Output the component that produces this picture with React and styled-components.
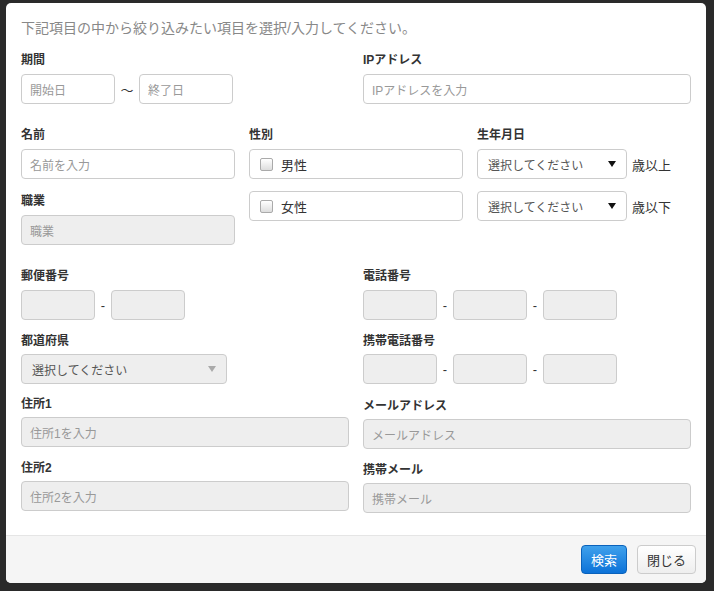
import React from "react";
import styled, { createGlobalStyle } from "styled-components";

const G = createGlobalStyle`
  body{margin:0;background:#2a2a2a;font-family:"Liberation Sans","Noto Sans CJK JP",sans-serif;}
`;
const Modal = styled.div`
  position:relative;margin:3px 0 0 6px;width:700px;height:580px;background:#fff;border-radius:5px;
  display:flex;flex-direction:column;overflow:hidden;
`;
const Body = styled.div`flex:1;padding:15px 15px 0 15px;`;
const Intro = styled.div`font-size:14px;color:#888;margin-bottom:15px;line-height:20px;`;
const Row = styled.div`display:flex;gap:14px;margin-top:${p=>p.mt||0}px;`;
const Col = styled.div`width:${p=>p.w}px;display:flex;flex-direction:column;`;
const Label = styled.div`font-size:12px;font-weight:bold;color:#333;height:14px;line-height:14px;margin-bottom:${p=>p.mb??7}px;`;
const Input = styled.div`
  box-sizing:border-box;width:${p=>p.w}px;height:30px;border:1px solid #ccc;border-radius:4px;
  background:${p=>p.dis?"#eee":"#fff"};font-size:12px;color:#999;padding:0 8px;display:flex;align-items:center;
`;
const Line = styled.div`display:flex;align-items:center;gap:${p=>p.g??6}px;`;
const Sep = styled.span`font-size:13px;color:#333;width:${p=>p.w}px;text-align:center;`;
const Check = styled(Input)`color:#333;font-size:13px;gap:8px;padding:0 10px;`;
const Box = styled.span`width:11px;height:11px;border:1px solid #aaa;border-radius:2px;background:linear-gradient(#fff,#ddd);`;
const Select = styled(Input)`color:#555;justify-content:space-between;padding:0 10px;
  &::after{content:"";border-left:4px solid transparent;border-right:4px solid transparent;border-top:6px solid ${p=>p.light?"#aaa":"#111"};}`;
const Suffix = styled.span`font-size:13px;color:#333;`;
const Footer = styled.div`height:47px;border-top:1px solid #e5e5e5;background:#f5f5f5;display:flex;justify-content:flex-end;align-items:center;gap:10px;padding:0 10px;`;
const Btn = styled.div`
  height:29px;box-sizing:border-box;padding:0 9px;border-radius:4px;display:flex;align-items:center;font-size:13px;
  ${p=>p.primary?"background:linear-gradient(#3fa1ec,#0c72d8);color:#fff;border:1px solid #0a62bb;":"background:linear-gradient(#fff,#eee);color:#333;border:1px solid #ccc;"}
`;

export default function App(){
  return <><G/><Modal>
    <Body>
      <Intro>下記項目の中から絞り込みたい項目を選択/入力してください。</Intro>
      <Row>
        <Col w={328}><Label>期間</Label>
          <Line g={0}><Input w={94}>開始日</Input><Sep w={24}>～</Sep><Input w={94}>終了日</Input></Line>
        </Col>
        <Col w={328}><Label>IPアドレス</Label><Input w={328}>IPアドレスを入力</Input></Col>
      </Row>
      <Row mt={24}>
        <Col w={214}>
          <Label>名前</Label><Input w={214}>名前を入力</Input>
          <Label style={{marginTop:15}}>職業</Label><Input w={214} dis>職業</Input>
        </Col>
        <Col w={214}>
          <Label>性別</Label>
          <Check w={214}><Box/>男性</Check>
          <Check w={214} style={{marginTop:12}}><Box/>女性</Check>
        </Col>
        <Col w={214}>
          <Label>生年月日</Label>
          <Line g={5}><Select w={150}>選択してください</Select><Suffix>歳以上</Suffix></Line>
          <Line g={5} style={{marginTop:12}}><Select w={150}>選択してください</Select><Suffix>歳以下</Suffix></Line>
        </Col>
      </Row>
      <Row mt={24}>
        <Col w={328}>
          <Label>郵便番号</Label>
          <Line g={0}><Input w={74} dis/><Sep w={16}>-</Sep><Input w={74} dis/></Line>
          <Label style={{marginTop:14}} mb={6}>都道府県</Label>
          <Select w={206} dis light>選択してください</Select>
          <Label style={{marginTop:13}} mb={6}>住所1</Label><Input w={328} dis>住所1を入力</Input>
          <Label style={{marginTop:14}} mb={6}>住所2</Label><Input w={328} dis>住所2を入力</Input>
        </Col>
        <Col w={328}>
          <Label>電話番号</Label>
          <Line g={0}><Input w={74} dis/><Sep w={16}>-</Sep><Input w={74} dis/><Sep w={16}>-</Sep><Input w={74} dis/></Line>
          <Label style={{marginTop:14}} mb={6}>携帯電話番号</Label>
          <Line g={0}><Input w={74} dis/><Sep w={16}>-</Sep><Input w={74} dis/><Sep w={16}>-</Sep><Input w={74} dis/></Line>
          <Label style={{marginTop:15}} mb={6}>メールアドレス</Label><Input w={328} dis>メールアドレス</Input>
          <Label style={{marginTop:14}} mb={6}>携帯メール</Label><Input w={328} dis>携帯メール</Input>
        </Col>
      </Row>
    </Body>
    <Footer><Btn primary>検索</Btn><Btn>閉じる</Btn></Footer>
  </Modal></>;
}
